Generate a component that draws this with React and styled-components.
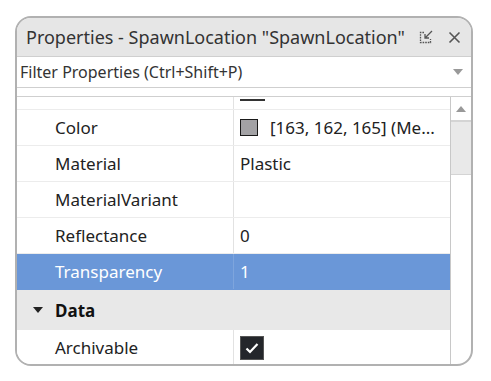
import styled, { createGlobalStyle } from "styled-components";

const GlobalStyle = createGlobalStyle`
    body {
        margin: 0;
        background: #ffffff;
        font-family: "Noto Sans", "Open Sans", sans-serif;
        color: #222;
    }
`;

const Page = styled.div`
    padding: 16px 0 0 15px;
`;

const Panel = styled.div`
    width: 458px;
    height: 350px;
    box-sizing: border-box;
    border: 2px solid #b1b1b1;
    border-radius: 16px;
    overflow: hidden;
    display: flex;
    flex-direction: column;
    background: #fff;
`;

const TitleBar = styled.div`
    height: 38px;
    flex-shrink: 0;
    background: #e6e6e6;
    display: flex;
    align-items: center;
    padding: 0 6px 0 9px;
    font-size: 18px;
    color: #333;
`;

const Title = styled.div`
    flex: 1;
    white-space: nowrap;
`;

const TitleButton = styled.span`
    width: 22px;
    height: 22px;
    display: flex;
    align-items: center;
    justify-content: center;
    margin-left: 6px;
    color: #555;
`;

const FilterBar = styled.div`
    height: 32px;
    flex-shrink: 0;
    box-sizing: border-box;
    border-top: 1px solid #cfcfcf;
    border-bottom: 1px solid #cfcfcf;
    display: flex;
    align-items: center;
    padding: 0 8px 0 3px;
    font-size: 16px;
    color: #333;
`;

const FilterText = styled.div`
    flex: 1;
`;

const Spacer = styled.div`
    height: 8px;
    flex-shrink: 0;
    border-bottom: 1px solid #cfcfcf;
`;

const Body = styled.div`
    flex: 1;
    display: flex;
    overflow: hidden;
`;

const Grid = styled.div`
    flex: 1;
    display: flex;
    flex-direction: column;
`;

const Row = styled.div`
    display: grid;
    grid-template-columns: 216px 1fr;
    height: ${(p) => p.$h || 36}px;
    flex-shrink: 0;
    box-sizing: border-box;
    border-bottom: 1px solid ${(p) => (p.$selected ? "#6a97d8" : "#ececec")};
    background: ${(p) => (p.$selected ? "#6a97d8" : "#fff")};
    color: ${(p) => (p.$selected ? "#fff" : "#222")};
    font-size: 17px;
`;

const NameCell = styled.div`
    display: flex;
    align-items: center;
    padding-left: 38px;
    white-space: nowrap;
`;

const ValueCell = styled.div`
    display: flex;
    align-items: center;
    gap: 12px;
    padding-left: 6px;
    border-left: 1px solid ${(p) => (p.$selected ? "#7ea5dd" : "#e2e2e2")};
    white-space: nowrap;
    overflow: hidden;
`;

const CategoryRow = styled.div`
    height: 40px;
    flex-shrink: 0;
    display: flex;
    align-items: center;
    background: #e8e8e8;
    font-size: 17px;
    font-weight: 700;
    color: #111;
`;

const Caret = styled.span`
    width: 38px;
    display: flex;
    justify-content: center;
    padding-left: 3px;
    box-sizing: border-box;
`;

const Swatch = styled.span`
    width: 16px;
    height: 15px;
    background: ${(p) => p.$color};
    border: 1px solid #1a1a1a;
    flex-shrink: 0;
`;

const PartialBar = styled.span`
    width: 25px;
    height: 2px;
    background: #333;
    align-self: flex-start;
    margin-top: 2px;
`;

const Checkbox = styled.span`
    width: 24px;
    height: 24px;
    background: #24262b;
    border: 1px solid #555;
    box-sizing: border-box;
    display: flex;
    align-items: center;
    justify-content: center;
`;

const Scrollbar = styled.div`
    width: 20px;
    flex-shrink: 0;
    border-left: 1px solid #c8c8c8;
    display: flex;
    flex-direction: column;
`;

const ScrollButton = styled.div`
    height: 23px;
    display: flex;
    align-items: center;
    justify-content: center;
`;

const Thumb = styled.div`
    height: 52px;
    background: #e9e9e9;
    border-top: 2px solid #d4d4d4;
    border-bottom: 1px solid #d4d4d4;
`;

const RestoreIcon = () => (
    <svg width="16" height="16" viewBox="0 0 16 16" fill="none" stroke="#555" strokeWidth="1.3">
        <path d="M6 3.5H2.5V13.5H12.5V10" strokeDasharray="1.6 1" />
        <path d="M14 2L7 9M7 5V9H11" />
    </svg>
);

const CloseIcon = () => (
    <svg width="13" height="13" viewBox="0 0 13 13" stroke="#555" strokeWidth="1.6">
        <path d="M1.5 1.5L11.5 11.5M11.5 1.5L1.5 11.5" />
    </svg>
);

const Triangle = ({ up, color = "#999" }) => (
    <svg width="10" height="6" viewBox="0 0 10 6" fill={color}>
        <path d={up ? "M0 6L5 0L10 6Z" : "M0 0H10L5 6Z"} />
    </svg>
);

const CheckMark = () => (
    <svg width="14" height="12" viewBox="0 0 14 12" fill="none" stroke="#fff" strokeWidth="2.2">
        <path d="M1.5 6.5L5 10L12.5 2" />
    </svg>
);

const properties = [
    { name: "Color", value: "[163, 162, 165] (Me...", swatch: "#a3a2a5" },
    { name: "Material", value: "Plastic" },
    { name: "MaterialVariant", value: "" },
    { name: "Reflectance", value: "0" },
    { name: "Transparency", value: "1", selected: true },
];

const App = () => {
    return (
        <>
            <GlobalStyle />
            <Page>
                <Panel>
                    <TitleBar>
                        <Title>Properties - SpawnLocation "SpawnLocation"</Title>
                        <TitleButton>
                            <RestoreIcon />
                        </TitleButton>
                        <TitleButton>
                            <CloseIcon />
                        </TitleButton>
                    </TitleBar>
                    <FilterBar>
                        <FilterText>Filter Properties (Ctrl+Shift+P)</FilterText>
                        <Triangle />
                    </FilterBar>
                    <Spacer />
                    <Body>
                        <Grid>
                            <Row $h={13}>
                                <NameCell />
                                <ValueCell>
                                    <PartialBar />
                                </ValueCell>
                            </Row>
                            {properties.map((p) => (
                                <Row key={p.name} $selected={p.selected}>
                                    <NameCell>{p.name}</NameCell>
                                    <ValueCell $selected={p.selected}>
                                        {p.swatch && <Swatch $color={p.swatch} />}
                                        {p.value}
                                    </ValueCell>
                                </Row>
                            ))}
                            <CategoryRow>
                                <Caret>
                                    <Triangle color="#222" />
                                </Caret>
                                Data
                            </CategoryRow>
                            <Row>
                                <NameCell>Archivable</NameCell>
                                <ValueCell>
                                    <Checkbox>
                                        <CheckMark />
                                    </Checkbox>
                                </ValueCell>
                            </Row>
                        </Grid>
                        <Scrollbar>
                            <ScrollButton>
                                <Triangle up />
                            </ScrollButton>
                            <Thumb />
                        </Scrollbar>
                    </Body>
                </Panel>
            </Page>
        </>
    );
};

export default App;
